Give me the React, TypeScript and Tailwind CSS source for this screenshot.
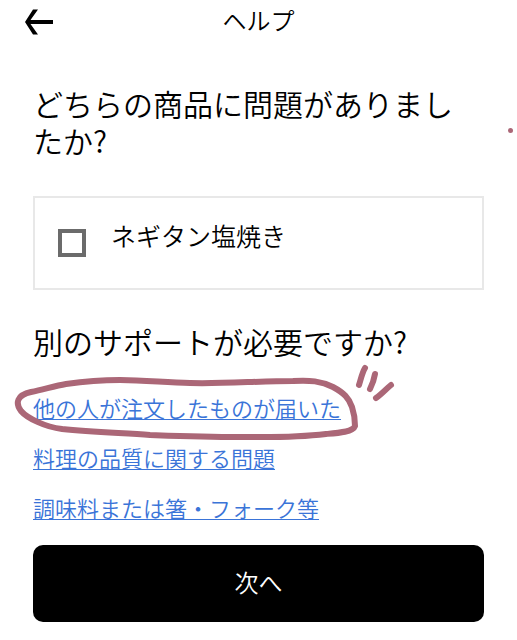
const supportLinks = [
  { label: "他の人が注文したものが届いた", href: "#wrong-order", marked: true },
  { label: "料理の品質に関する問題", href: "#quality" },
  { label: "調味料または箸・フォーク等", href: "#utensils" },
];

const items = [{ id: "item-1", name: "ネギタン塩焼き" }];

function BackArrow() {
  return (
    <svg width="28" height="26" viewBox="0 0 28 26">
      <path d="M8 0.5h5L5.5 11H28v4H5.5L13 25.500H8L0 13z" />
    </svg>
  );
}

// Hand-drawn loop round a link, with three strokes at its upper right
function PenMark() {
  return (
    <svg
      className="pointer-events-none absolute -top-[18px] -left-5 h-[80px] w-[386px]"
      viewBox="0 0 386 80"
      fill="none"
      stroke="#ab6777"
      strokeWidth="6"
      strokeLinecap="round"
      strokeLinejoin="round"
      aria-hidden="true"
    >
      <path d="M49 65C32 63 14 54 8 47C2 39 4 31 18 28C32 25 42 22 53 20C74 17 90 16 107 16C134 16 154 19 177 19C210 20 245 17 280 17C297 16 308 17 320 23C331 29 336 34 339 43C342 52 342 56 342 62C340 68 325 69 313 70C280 74 255 73 227 73C190 73 165 72 137 71C110 69 80 68 49 65" />
      <path d="M352 4C349 9 348 15 346 21" />
      <path d="M362 10C361 16 360 19 357 25" />
      <path d="M378 21C373 25 369 30 363 34" />
    </svg>
  );
}

export default function App() {
  return (
    <div
      lang="ja"
      className="relative bg-white pb-[18px] font-['Noto_Sans_CJK_JP',sans-serif] font-[350] text-black"
    >
      <header className="grid h-10 grid-cols-[28px_1fr_28px] items-center px-[25px]">
        <button type="button" aria-label="戻る" className="mt-1">
          <BackArrow />
        </button>
        <h1 className="text-center text-2xl leading-10">ヘルプ</h1>
      </header>

      <main className="px-[33px] pt-[45px]">
        <h2 className="pr-6 text-[30px] leading-[37px]">どちらの商品に問題がありましたか?</h2>

        {items.map((item) => (
          <div
            key={item.id}
            className="mt-[37px] flex h-[94px] items-center gap-[25px] border-2 border-[#e8e8e8] px-[23px]"
          >
            <input
              id={item.id}
              type="checkbox"
              className="size-7 appearance-none border-4 border-[#6b6b6b] bg-white checked:bg-[#6b6b6b]"
            />
            <label htmlFor={item.id} className="pb-4 text-[25px] leading-8">
              {item.name}
            </label>
          </div>
        ))}

        <h2 className="mt-[33px] text-[30px] leading-[37px]">別のサポートが必要ですか?</h2>

        <ul className="mt-[22px]">
          {supportLinks.map((link) => (
            <li key={link.href} className="relative text-[22px] leading-[50px]">
              <a
                href={link.href}
                className="text-[#3a74d8] underline decoration-1 underline-offset-2"
              >
                {link.label}
              </a>
              {link.marked && <PenMark />}
            </li>
          ))}
        </ul>

        <button
          type="button"
          className="mt-[13px] h-[77px] w-full rounded-[10px] bg-black pb-1 text-2xl text-white"
        >
          次へ
        </button>
      </main>

      <span className="absolute top-[128px] right-1 size-[5px] rounded-full bg-[#ab6777]" />
    </div>
  );
}
